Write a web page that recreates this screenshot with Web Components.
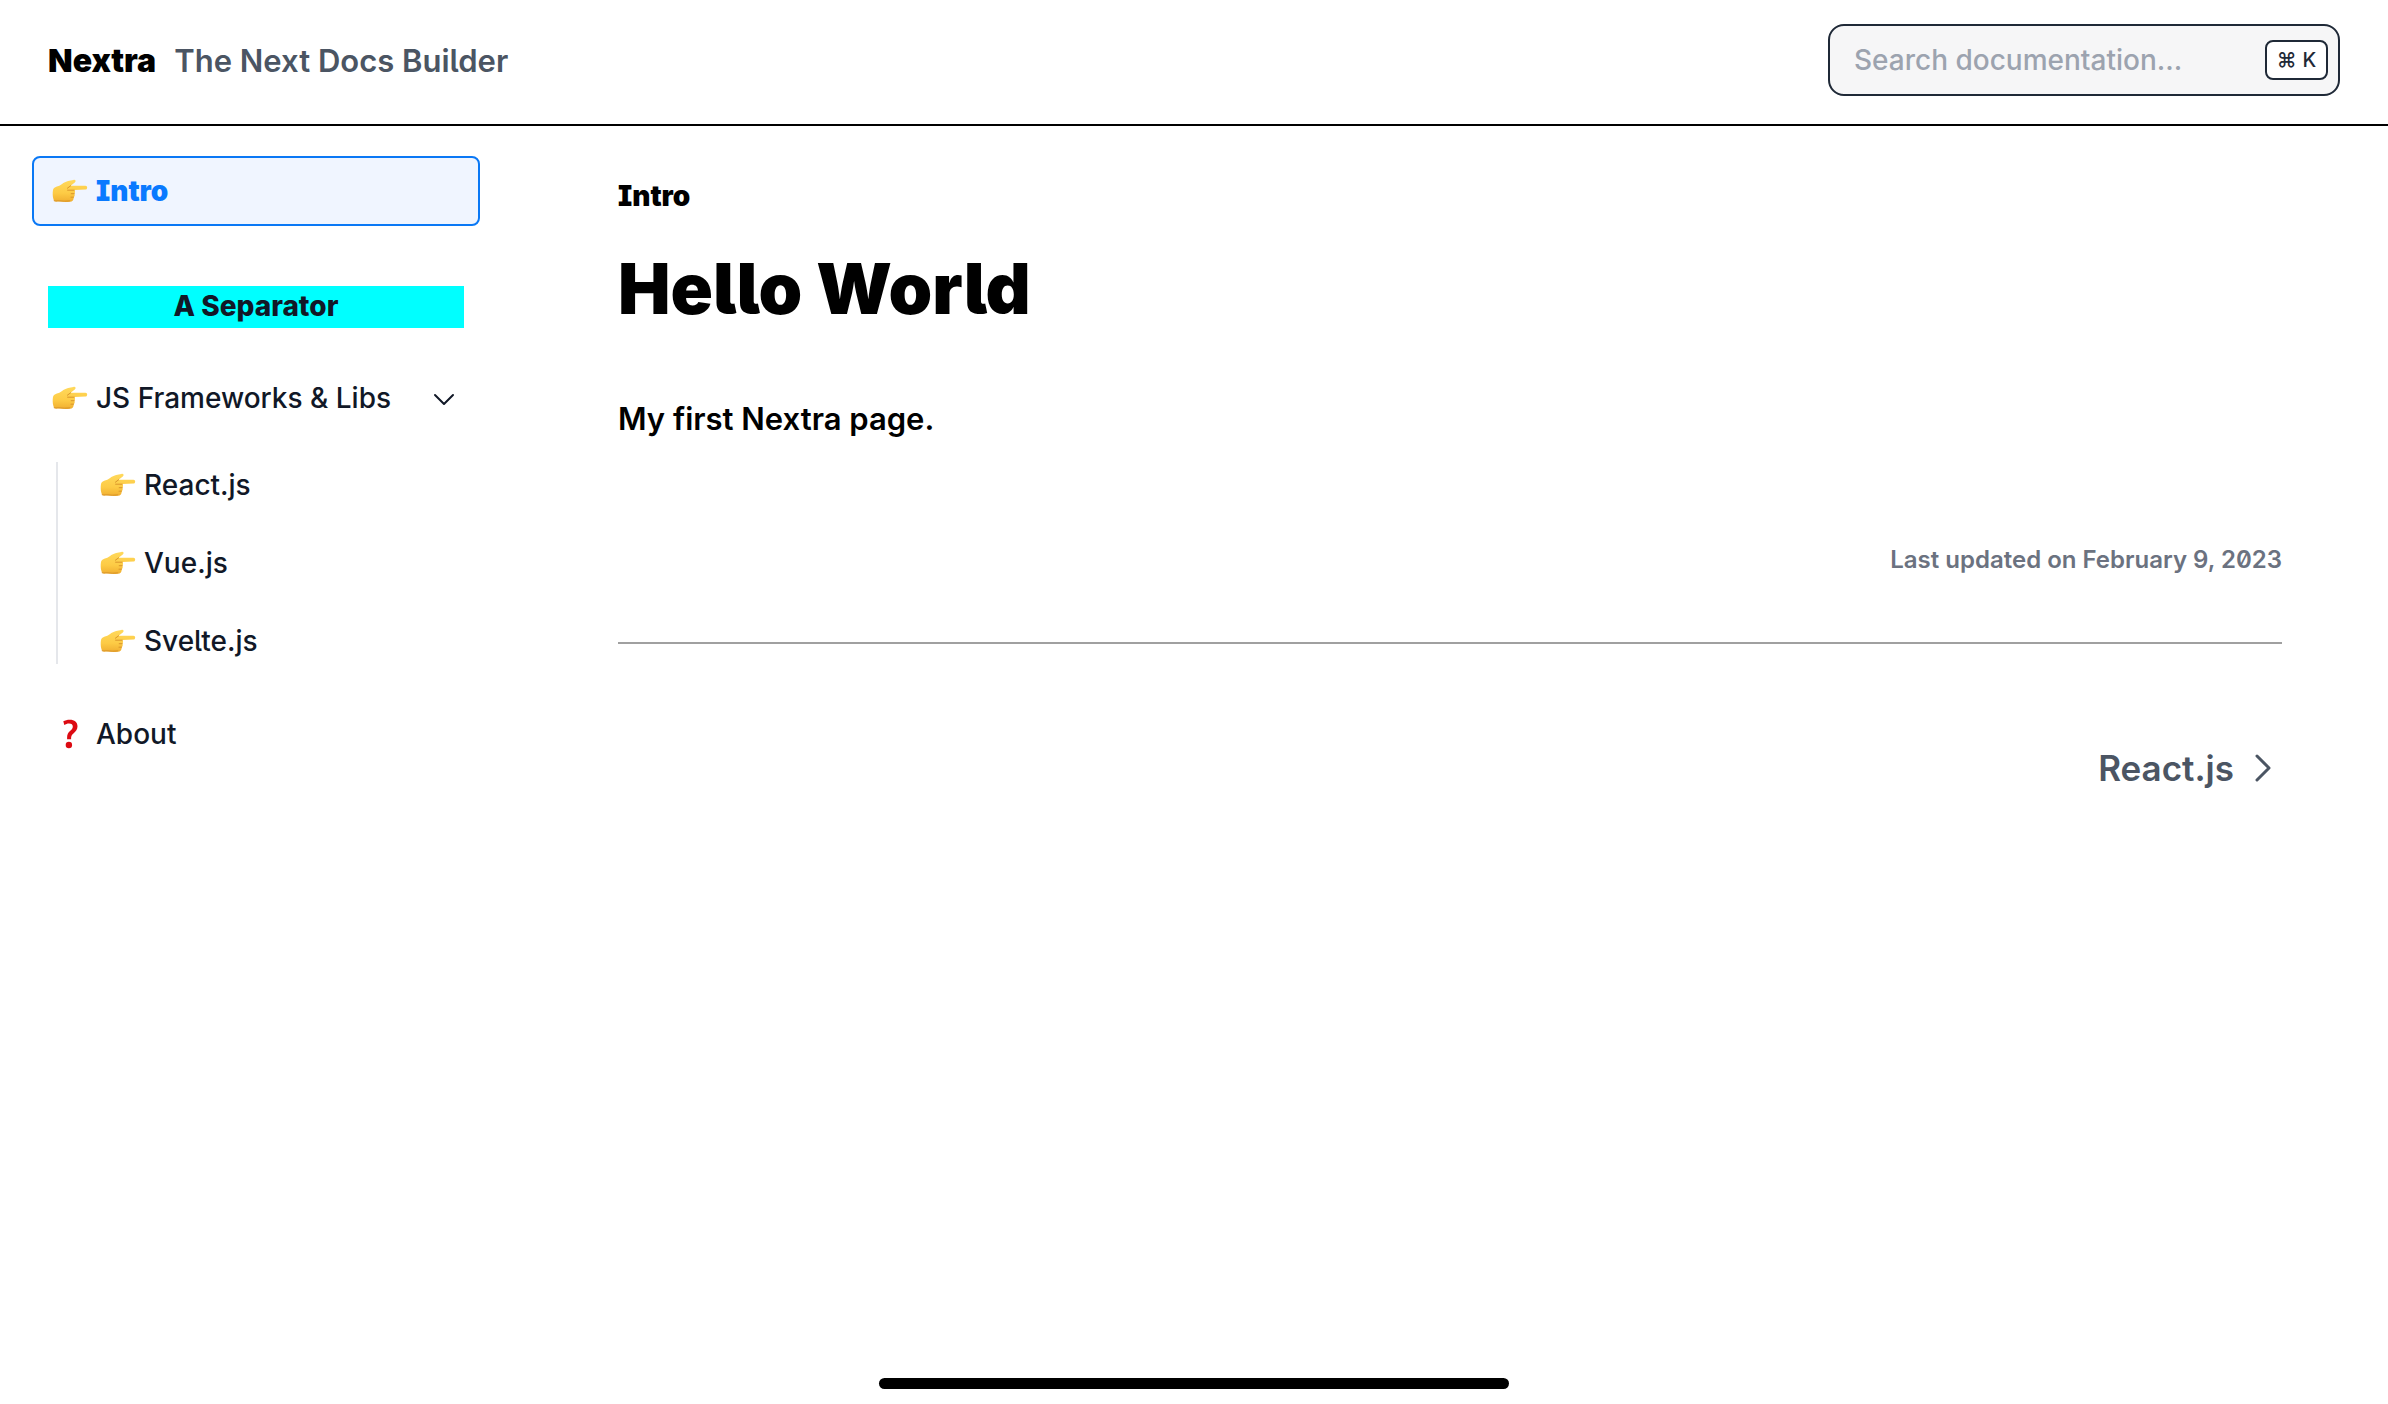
<!DOCTYPE html>
<html lang="en">
<head>
<meta charset="utf-8">
<meta name="viewport" content="width=device-width, initial-scale=1">
<title>Intro – Nextra</title>
<style>
  body {
    margin: 0;
    min-height: 100vh;
    background: #fff;
    color: #000;
    font-family: Inter, "Liberation Sans", sans-serif;
    font-feature-settings: "cv05", "cv08", "zero";
    font-weight: 500;
    --ink: #111827;
    --muted: #4b5563;
    --accent: #0a78f5;
    --nav-size: 28px;
  }
  .layout { display: flex; align-items: flex-start; }
</style>
</head>
<body>
<docs-header>
  <span slot="brand">Nextra</span>
  <span slot="tagline">The Next Docs Builder</span>
</docs-header>
<div class="layout">
  <docs-sidebar>
    <nav-item icon="hand" href="#intro" active>Intro</nav-item>
    <nav-separator>A Separator</nav-separator>
    <nav-group>
      <span slot="label">JS Frameworks &amp; Libs</span>
      <nav-item nested icon="hand" href="#react">React.js</nav-item>
      <nav-item nested icon="hand" href="#vue">Vue.js</nav-item>
      <nav-item nested icon="hand" href="#svelte">Svelte.js</nav-item>
    </nav-group>
    <nav-item icon="question" href="#about">About</nav-item>
  </docs-sidebar>
  <docs-article>
    <span slot="crumb">Intro</span>
    <span slot="title">Hello World</span>
    <span slot="body">My first Nextra page.</span>
    <span slot="updated">Last updated on February 9, 2023</span>
    <span slot="next">React.js</span>
  </docs-article>
</div>
<home-indicator></home-indicator>

<script>
const define = (name, html) => customElements.define(name, class extends HTMLElement {
  constructor() {
    super();
    this.attachShadow({ mode: "open" }).innerHTML = html;
  }
});

const icons = {
  hand: `<svg viewBox="0 0 36 24" width="36" height="24" aria-hidden="true">
    <defs><linearGradient id="g" x1="0" y1="0" x2="0" y2="1">
      <stop offset="0" stop-color="#ffd95c"/><stop offset=".6" stop-color="#fdcb45"/><stop offset="1" stop-color="#f0ae30"/>
    </linearGradient></defs>
    <path fill="url(#g)" d="M1.200 10.200C2 8.600 4.200 7.600 6.600 7c1.700-.4 3-1.500 4.700-2.900C14 2 18 1.600 21.400.900c2.200-.5 3 1.500 1.400 2.500L18.600 6.800h14.800c2.400 0 2.400 3.800 0 3.800l-11 .5c.9 1.200.8 2.600 0 3.600.6 1.300.3 2.600-.7 3.500.2 2.600-1.200 4.400-3.900 4.600-3.500.3-7 .2-9.600-.2-1.800-.4-3 .3-4.600 0C.6 22.100.2 13.400 1.200 10.200Z"/>
    <path fill="none" stroke="#d9952a" stroke-width="1" stroke-linecap="round" d="M18.600 6.800l-3.200 2.400M15.600 11.200h6.600M22.200 14.700h-3M21.500 18.200h-2.500M2.200 21.800c1.500.5 3-.3 4.600 0 3.600.5 7.600.5 11 .1"/>
  </svg>`,
  question: `<svg viewBox="0 0 36 32" width="36" height="32" aria-hidden="true">
    <g fill="#dc0a12"><path d="M11.300 3.200C13 2.300 15.200 1.700 17.800 1.700c4.700 0 7.700 2.500 7.700 6.600 0 3.200-1.700 5.100-3.800 6.900-1.700 1.500-2.500 2.600-2.600 4.600v1.400h-4v-1.700c0-3 1-4.700 2.900-6.500 1.700-1.600 2.800-2.700 2.800-4.300 0-2-1.300-3.200-3.700-3.200-1.900 0-3.400.6-4.800 1.500Z"/>
    <circle cx="16.900" cy="27" r="3.200"/></g>
  </svg>`
};

class NavItem extends HTMLElement {
  connectedCallback() {
    const root = this.attachShadow({ mode: "open" });
    root.innerHTML = `
      <style>
        :host { display: block; }
        a {
          box-sizing: border-box; display: flex; align-items: center; gap: 8px;
          height: 70px; padding: 0 18px; border: 2px solid transparent; border-radius: 8px;
          color: var(--ink); font-size: var(--nav-size); line-height: 40px; text-decoration: none;
        }
        svg { flex: none; }
        :host([nested]) a { height: 46px; padding-left: 40px; }
        :host([active]) a { border-color: var(--accent); background: #f0f5ff; color: #0a7aff; font-weight: 900; }
      </style>
      <a href="${this.getAttribute("href")}">${icons[this.getAttribute("icon")]}<slot></slot></a>`;
  }
}
customElements.define("nav-item", NavItem);

define("docs-header", `
  <style>
    :host {
      display: flex; align-items: center; justify-content: space-between; box-sizing: border-box;
      height: 126px; padding: 0 48px 4px; border-bottom: 2px solid #000;
    }
    a { display: flex; align-items: baseline; gap: 18px; padding-top: 2px; line-height: 40px; color: #000; text-decoration: none; }
    .brand { font-size: 32px; font-weight: 900; }
    .tagline { color: var(--muted); font-size: 31px; font-weight: 600; }
  </style>
  <a href="#"><span class="brand"><slot name="brand"></slot></span><span class="tagline"><slot name="tagline"></slot></span></a>
  <docs-search></docs-search>`);

define("docs-search", `
  <style>
    :host {
      box-sizing: border-box; display: flex; align-items: center; width: 512px; height: 72px;
      padding: 0 10px 0 24px; border: 2px solid #1f2937; border-radius: 16px; background: #f6f6f7;
    }
    input {
      flex: 1; min-width: 0; padding: 0; border: 0; outline: 0; background: none;
      font: inherit; font-size: 28px; line-height: 40px; color: var(--ink);
    }
    input::placeholder { color: #9ca3af; opacity: 1; }
    kbd {
      box-sizing: border-box; display: flex; align-items: center; justify-content: center; gap: 6px;
      width: 63px; height: 40px; border: 2px solid #1f2937; border-radius: 8px; background: #fff;
      color: #1f2937; font-family: Inter, "DejaVu Sans", sans-serif; font-size: 20px; line-height: 24px;
    }
  </style>
  <input type="search" aria-label="Search documentation" placeholder="Search documentation…">
  <kbd><span>⌘</span><span>K</span></kbd>`);

define("docs-sidebar", `
  <style>
    :host { display: block; }
    nav { box-sizing: border-box; display: flex; flex-direction: column; width: 512px; padding: 30px 32px; }
  </style>
  <nav aria-label="Documentation"><slot></slot></nav>`);

define("nav-separator", `
  <style>
    :host {
      display: block; margin: 60px 16px 35px; background: #0ff; color: var(--ink);
      font-size: var(--nav-size); font-weight: 800; line-height: 40px; padding-bottom: 2px; text-align: center;
    }
  </style>
  <slot></slot>`);

define("nav-group", `
  <style>
    :host { display: block; margin-bottom: 35px; }
    button {
      box-sizing: border-box; display: flex; align-items: center; gap: 8px; width: 100%; height: 70px;
      padding: 0 24px 0 20px; border: 0; background: none; color: var(--ink);
      font: inherit; font-size: var(--nav-size); line-height: 40px; font-feature-settings: inherit; text-align: left;
    }
    .label { flex: 1; }
    .items { display: flex; flex-direction: column; gap: 32px; margin: 29px 0 0 24px; border-left: 2px solid #e5e7eb; }
  </style>
  <button type="button" aria-expanded="true">${icons.hand}<span class="label"><slot name="label"></slot></span>
    <svg viewBox="0 0 24 24" width="24" height="24" fill="none" stroke="#111827" stroke-width="2" stroke-linecap="round" stroke-linejoin="round" aria-hidden="true"><path d="M3 9l9 9 9-9"/></svg>
  </button>
  <div class="items"><slot></slot></div>`);

define("docs-article", `
  <style>
    :host { display: block; flex: 1; min-width: 0; padding: 50px 106px; }
    .crumb { font-size: 28px; font-weight: 900; line-height: 40px; }
    h1 { margin: 33px 0 0; font-size: 70px; font-weight: 900; line-height: 80px; }
    p { margin: 62px 0 0; font-size: 31px; font-weight: 600; line-height: 56px; }
    .updated { margin: 93px 0 62px; color: #6b7280; font-size: 24px; font-weight: 600; line-height: 40px; text-align: right; }
    footer { display: flex; justify-content: flex-end; padding: 96px 8px 0; border-top: 2px solid #a0a0a0; }
    a { display: flex; align-items: center; gap: 16px; color: var(--muted); font-size: 35px; font-weight: 600; line-height: 56px; text-decoration: none; }
  </style>
  <div class="crumb"><slot name="crumb"></slot></div>
  <h1><slot name="title"></slot></h1>
  <p><slot name="body"></slot></p>
  <div class="updated"><slot name="updated"></slot></div>
  <footer><a href="#react"><slot name="next"></slot>
    <svg viewBox="0 0 24 32" width="24" height="32" fill="none" stroke="#4b5563" stroke-width="3" stroke-linecap="round" stroke-linejoin="round" aria-hidden="true"><path d="M7 4l12 12L7 28"/></svg>
  </a></footer>`);

define("home-indicator", `
  <style>
    :host { position: fixed; right: 0; bottom: 15px; left: 0; display: flex; justify-content: center; pointer-events: none; }
    div { width: 630px; height: 11px; border-radius: 6px; background: #000; }
  </style>
  <div></div>`);
</script>
</body>
</html>
